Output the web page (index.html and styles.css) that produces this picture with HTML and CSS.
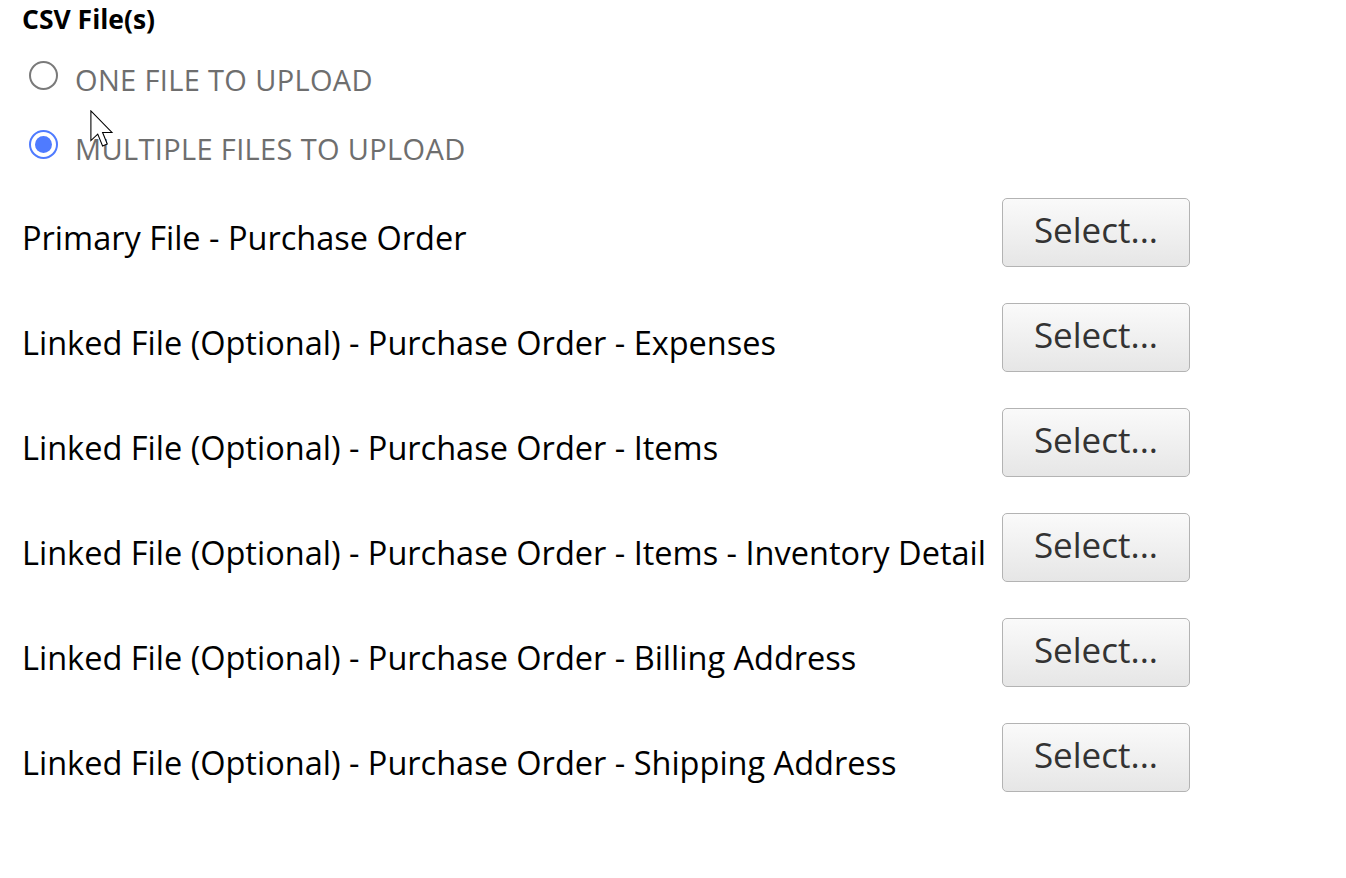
FILE: index.html
```html
<!DOCTYPE html>
<html>
<head>
<meta charset="utf-8">
<link rel="stylesheet" href="styles.css">
</head>
<body>
<div class="page">
  <div class="section-title">CSV File(s)</div>
  <div class="radios">
    <label class="radio-row">
      <span class="radio"></span>
      <span class="radio-label">ONE FILE TO UPLOAD</span>
    </label>
    <label class="radio-row">
      <span class="radio checked"><span class="dot"></span></span>
      <span class="radio-label">MULTIPLE FILES TO UPLOAD</span>
    </label>
  </div>
  <div class="files">
    <div class="file-row"><span class="file-label">Primary File - Purchase Order</span><button class="btn">Select...</button></div>
    <div class="file-row"><span class="file-label">Linked File (Optional) - Purchase Order - Expenses</span><button class="btn">Select...</button></div>
    <div class="file-row"><span class="file-label">Linked File (Optional) - Purchase Order - Items</span><button class="btn">Select...</button></div>
    <div class="file-row"><span class="file-label">Linked File (Optional) - Purchase Order - Items - Inventory Detail</span><button class="btn">Select...</button></div>
    <div class="file-row"><span class="file-label">Linked File (Optional) - Purchase Order - Billing Address</span><button class="btn">Select...</button></div>
    <div class="file-row"><span class="file-label">Linked File (Optional) - Purchase Order - Shipping Address</span><button class="btn">Select...</button></div>
  </div>
  <svg class="cursor" width="25.2" height="39.6" viewBox="0 0 14 22">
    <path d="M0.5 0.5 L0.5 17 L4.3 13.4 L7 20 L9.6 18.9 L7 12.5 L12.2 12.5 Z" fill="#fff" stroke="#000" stroke-width="0.6" stroke-linejoin="miter"/>
  </svg>
</div>
</body>
</html>
```
FILE: styles.css
```css
html, body {
  margin: 0;
  padding: 0;
  background: #fff;
}
body {
  font-family: "Open Sans", "Liberation Sans", sans-serif;
}
.page {
  position: relative;
  padding: 3px 0 40px 22px;
}
.section-title {
  font-weight: 700;
  font-size: 26.5px;
  line-height: 32px;
  color: #000;
}
.radios {
  display: flex;
  flex-direction: column;
  gap: 29px;
  margin-top: 25px;
}
.radio-row {
  display: flex;
  align-items: center;
  height: 40px;
}
.radio {
  box-sizing: border-box;
  width: 29px;
  height: 29px;
  border-radius: 50%;
  border: 2px solid #7a7a7a;
  margin-left: 7px;
  margin-right: 17px;
  margin-bottom: 9px;
  display: flex;
  align-items: center;
  justify-content: center;
  background: #fff;
}
.radio.checked {
  border: 2.5px solid #4f7bff;
}
.radio .dot {
  width: 17px;
  height: 17px;
  border-radius: 50%;
  background: #4f7bff;
}
.radio-label {
  font-size: 29px;
  letter-spacing: 0.35px;
  color: #6e6e6e;
  line-height: 40px;
}
.files {
  display: flex;
  flex-direction: column;
  gap: 37px;
  margin-top: 29px;
}
.file-row {
  display: flex;
  align-items: center;
  height: 68px;
}
.file-label {
  width: 980px;
  font-size: 32.5px;
  color: #000;
  line-height: 44px;
  padding-top: 12px;
  white-space: nowrap;
}
.btn {
  box-sizing: border-box;
  width: 188px;
  height: 69px;
  border: 1.5px solid #b3b3b3;
  border-radius: 5px;
  background: linear-gradient(#fafafa, #e6e6e6);
  font-family: "Open Sans", "Liberation Sans", sans-serif;
  font-size: 35px;
  color: #333;
  padding: 0 0 5px 0;
}
.cursor {
  position: absolute;
  left: 90px;
  top: 110px;
}
```
